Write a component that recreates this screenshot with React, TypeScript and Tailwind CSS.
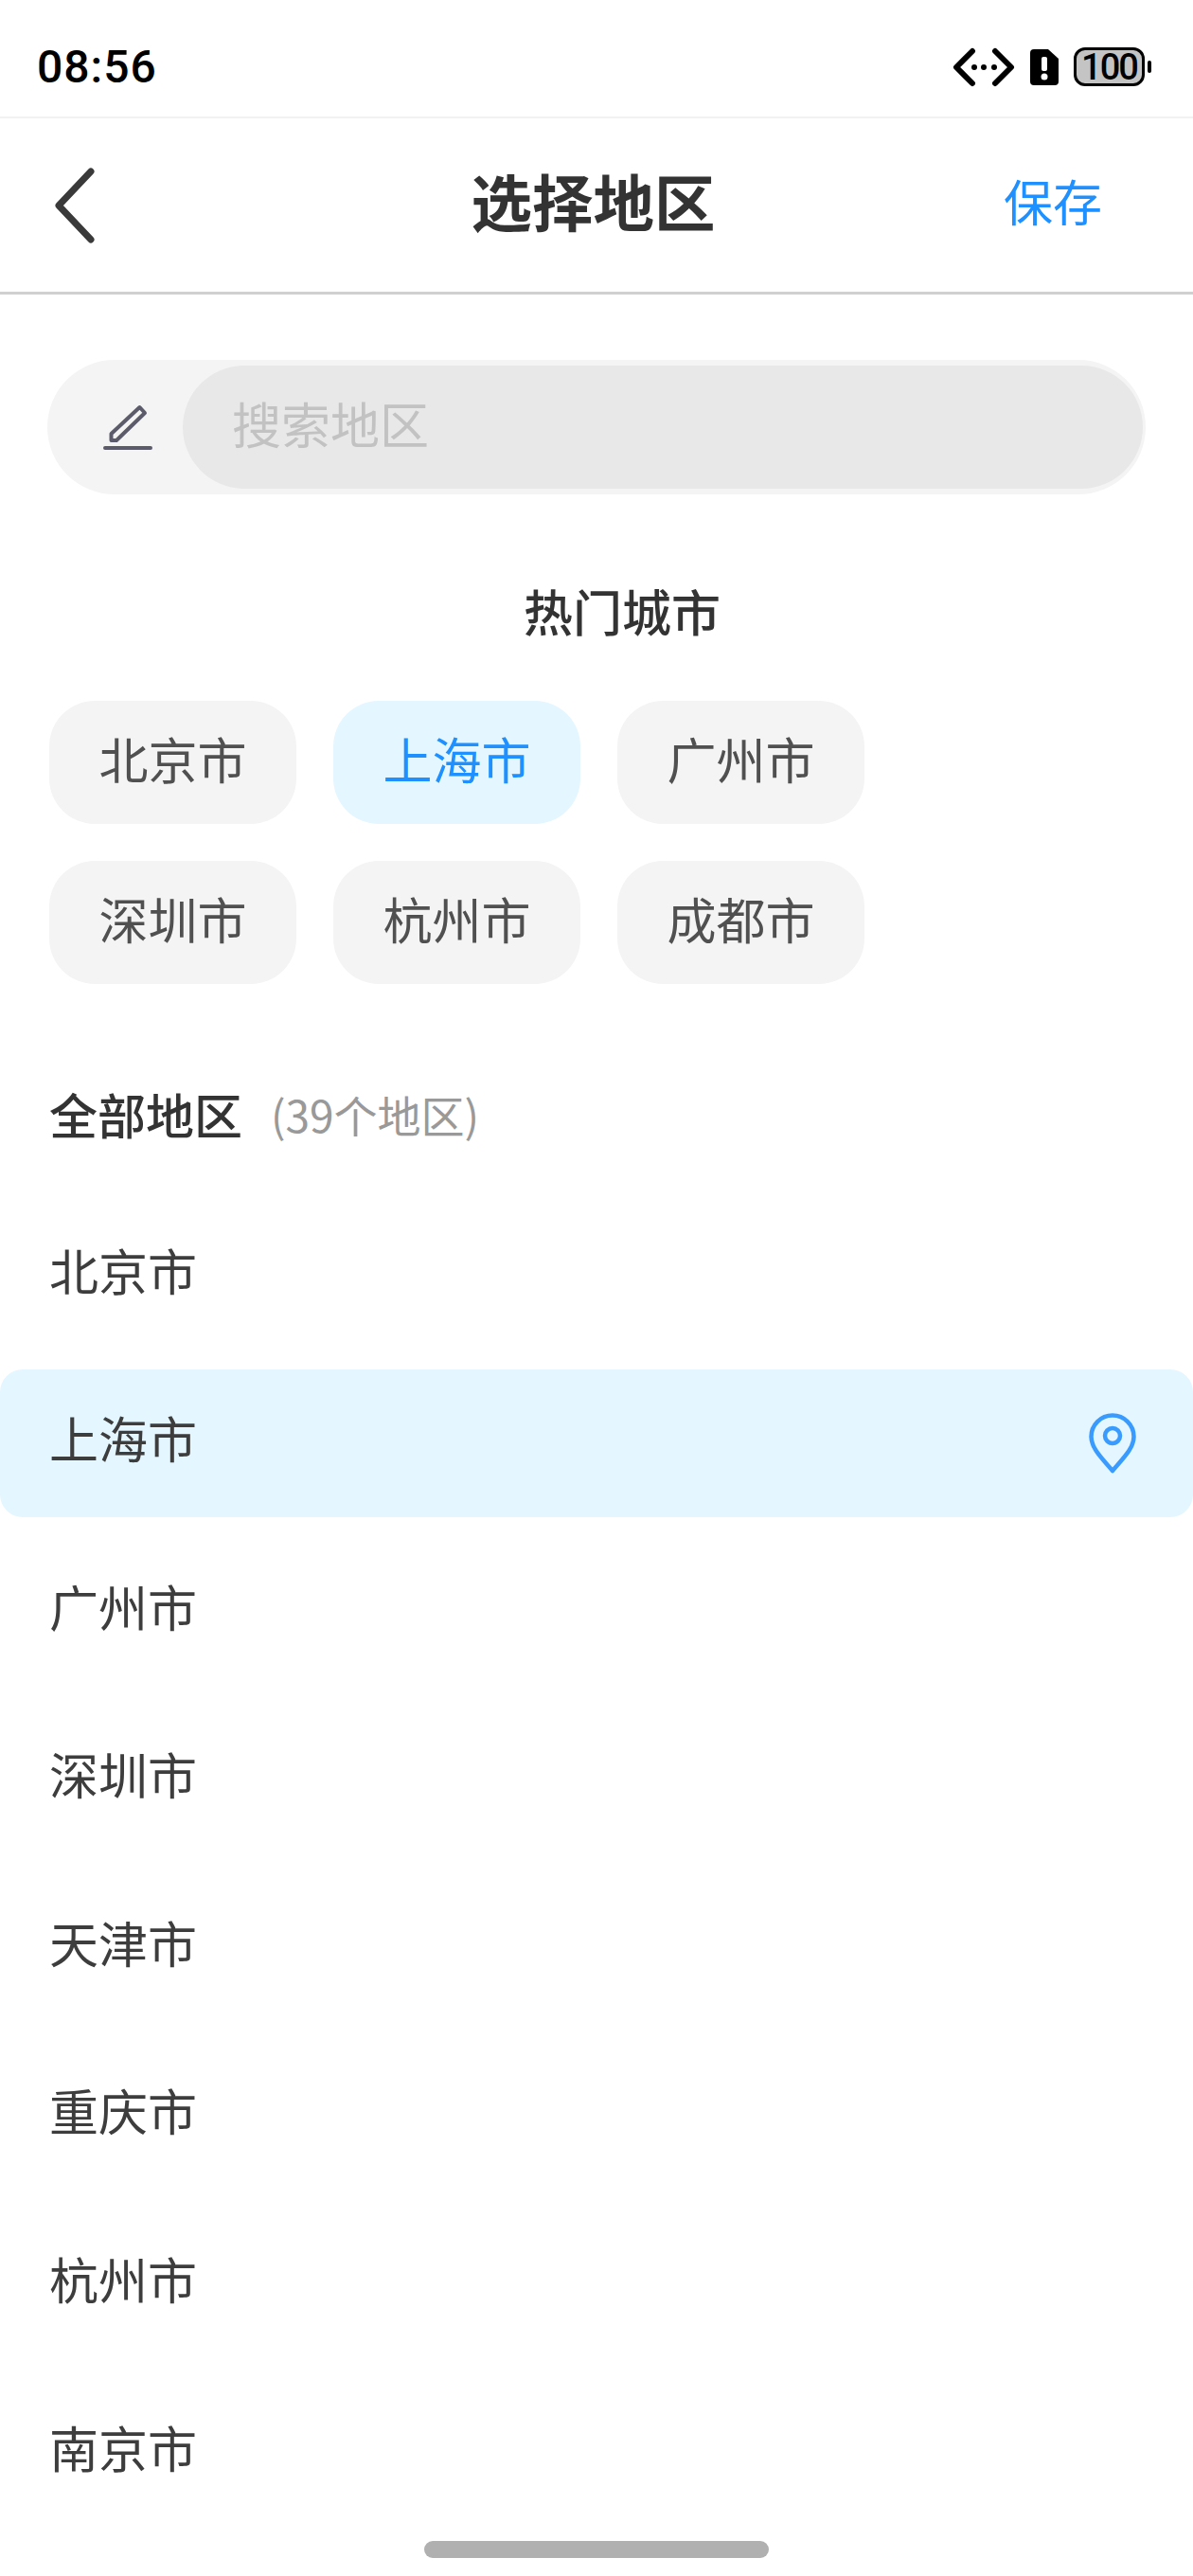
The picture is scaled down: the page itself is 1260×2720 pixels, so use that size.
const hotCities = ["北京市", "上海市", "广州市", "深圳市", "杭州市", "成都市"];
const allCities = ["北京市", "上海市", "广州市", "深圳市", "天津市", "重庆市", "杭州市", "南京市"];
const selected = "上海市";

function StatusIcons() {
  return (
    <div className="flex items-center gap-[16px]">
      <svg width="66" height="42" viewBox="0 0 66 42" fill="none" stroke="#000" strokeWidth="6" strokeLinecap="round" strokeLinejoin="round">
        <path d="M21 4 4 21l17 17M45 4l17 17-17 17" />
        <circle cx="23" cy="21" r="3" fill="#000" stroke="none" />
        <circle cx="33" cy="21" r="3" fill="#000" stroke="none" />
        <circle cx="44" cy="21" r="3" fill="#000" stroke="none" />
      </svg>
      <svg width="30" height="38" viewBox="0 0 30 38">
        <path d="M4 0h15l11 10v24a4 4 0 0 1-4 4H4a4 4 0 0 1-4-4V4a4 4 0 0 1 4-4Z" fill="#000" />
        <rect x="12" y="8" width="6" height="15" rx="2" fill="#fff" />
        <circle cx="15" cy="29" r="3.5" fill="#fff" />
      </svg>
      <div className="flex items-center gap-[3px]">
        <div className="flex h-[41px] w-[75px] items-center justify-center rounded-[12px] border-[3px] border-black bg-[#c4c4c4] font-['Roboto',sans-serif] text-[38px] font-medium leading-none tracking-[-2px] text-black">
          100
        </div>
        <div className="h-[13px] w-[4px] rounded-full bg-black" />
      </div>
    </div>
  );
}

export default function App() {
  return (
    <div className="relative h-[2720px] w-[1260px] overflow-hidden bg-white font-['Noto_Sans_CJK_SC',sans-serif]">
      {/* Status bar */}
      <div className="flex h-[125px] items-center justify-between border-b-2 border-[#f2f2f2] pl-[39px] pr-[44px] pt-[18px]">
        <span className="font-['Roboto',sans-serif] text-[48px] font-medium leading-none tracking-[1px] text-black">08:56</span>
        <StatusIcons />
      </div>

      {/* Header */}
      <div className="relative flex h-[186px] items-center justify-center border-b-[3px] border-[#d0d0d0]">
        <svg className="absolute left-[52px] top-[48px]" width="54" height="84" viewBox="0 0 54 84" fill="none" stroke="#3a3a3a" strokeWidth="7" strokeLinecap="round" strokeLinejoin="round">
          <path d="M44 8 10 44l34 36" />
        </svg>
        <span className="pb-[10px] pr-[7px] text-[64.5px] font-bold text-[#333333]">选择地区</span>
        <span className="absolute right-[96px] pb-[10px] text-[52px] text-[#1e90ff]">保存</span>
      </div>

      {/* Search */}
      <div className="mx-[50px] mt-[69px] flex h-[142px] items-center rounded-full bg-[#f4f4f4] pr-[3px]">
        <div className="flex w-[143px] shrink-0 justify-center pl-[26px]">
          <svg width="52" height="52" viewBox="0 0 52 52" fill="none" stroke="#5b5b6b" strokeWidth="4" strokeLinejoin="round">
            <path d="M8.5 33 38.500 5 44 11 14 40H8.500Z" />
            <path d="M2 48h48" strokeLinecap="round" />
          </svg>
        </div>
        <div className="flex h-[130px] flex-1 items-center rounded-full bg-[#e8e8e8] pb-[8px] pl-[52px] text-[52px] text-[#c2c2c2]">
          搜索地区
        </div>
      </div>

      {/* Hot cities */}
      <div className="mt-[87px] pl-[553px] text-[52px] font-medium leading-[72px] text-[#333333]">热门城市</div>
      <div className="ml-[52px] mt-[59px] grid w-[860px] grid-cols-[261px_261px_261px] gap-x-[39px] gap-y-[39px]">
        {hotCities.map((city) => (
          <div
            key={city}
            className={`flex h-[130px] items-center justify-center rounded-[48px] pb-[8px] text-[52px] ${
              city === selected ? "bg-[#e4f6ff] text-[#1e90ff]" : "bg-[#f4f4f4] text-[#505050]"
            }`}
          >
            {city}
          </div>
        ))}
      </div>

      {/* All regions */}
      <div className="ml-[52px] mt-[101px] flex items-center gap-[30px] leading-[72px]">
        <span className="text-[51px] font-medium text-[#333333]">全部地区</span>
        <span className="text-[46px] text-[#999999]">(39个地区)</span>
      </div>
      <div className="mt-[56px] flex flex-col gap-[21.6px]">
        {allCities.map((city) => (
          <div
            key={city}
            className={`flex h-[156px] shrink-0 items-center justify-between rounded-[24px] pl-[52px] pr-[60px] text-[52px] text-[#3d3d3d] ${
              city === selected ? "bg-[#e4f6ff]" : ""
            }`}
          >
            <span className="mb-[11px]">{city}</span>
            {city === selected && (
              <svg width="50" height="64" viewBox="0 0 50 64" fill="none" stroke="#3a9bff" strokeWidth="4.5">
                <path d="M25 61C13 47 2.500 37 2.500 25a22.500 22.500 0 0 1 45 0c0 12-10.500 22-22.500 36Z" strokeLinejoin="round" />
                <circle cx="25" cy="24" r="8" />
              </svg>
            )}
          </div>
        ))}
      </div>

      {/* Home indicator */}
      <div className="absolute bottom-[19px] left-[448px] h-[18px] w-[364px] rounded-full bg-[#b0b0b0]" />
    </div>
  );
}
